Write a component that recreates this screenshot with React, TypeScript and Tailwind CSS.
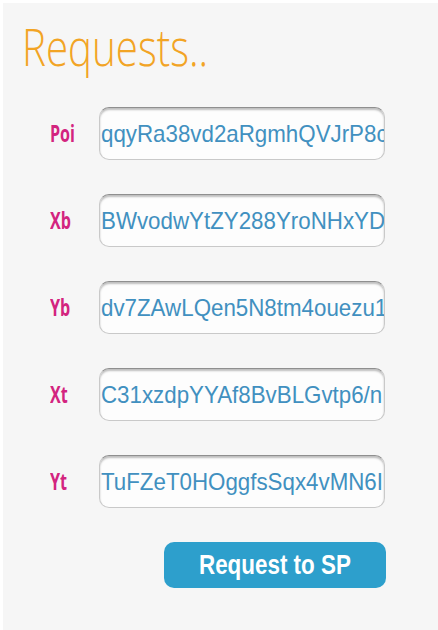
import React from "react";

const fields: { label: string; value: string }[] = [
  { label: "Poi", value: "qqyRa38vd2aRgmhQVJrP8c" },
  { label: "Xb", value: "BWvodwYtZY288YroNHxYDq" },
  { label: "Yb", value: "dv7ZAwLQen5N8tm4ouezu1" },
  { label: "Xt", value: "C31xzdpYYAf8BvBLGvtp6/n" },
  { label: "Yt", value: "TuFZeT0HOggfsSqx4vMN6I" },
];

export default function App() {
  return (
    <div className="w-[438px] h-[630px] bg-white pt-[3px] pl-[3px]">
      <div className="h-[627px] w-[435px] bg-[#f6f6f6] flex flex-col">
        <h1
          className="pl-[24px] pt-[13px] text-[51px] leading-[60px] font-light text-[#f2a425] origin-left scale-x-[0.79]"
          style={{ fontFamily: '"Open Sans", sans-serif' }}
        >
          Requests..
        </h1>

        <div className="mt-[31px] flex flex-col gap-[34px]">
          {fields.map((f) => (
            <div key={f.label} className="flex items-center h-[53px]">
              <div className="w-[96px] pl-[47px] shrink-0">
                <span
                  className="inline-block text-[23px] font-bold text-[#d3247f] origin-left scale-x-[0.7]"
                  style={{ fontFamily: '"Open Sans", sans-serif' }}
                >
                  {f.label}
                </span>
              </div>
              <div className="w-[286px] h-[53px] rounded-[10px] border border-[#c9c9c9] border-t-[#8f8f8f] bg-[#fdfdfd] shadow-[inset_0_2px_2px_rgba(0,0,0,0.25)] overflow-hidden flex items-center pl-[1px]">
                <span
                  className="inline-block whitespace-nowrap text-[24px] text-[#4190c0] origin-left scale-x-[0.93]"
                  style={{ fontFamily: '"Liberation Sans", Arial, sans-serif' }}
                >
                  {f.value}
                </span>
              </div>
            </div>
          ))}
        </div>

        <div className="mt-[34px] pl-[161px]">
          <button className="w-[222px] h-[46px] rounded-[10px] bg-[#2d9fcc] text-white flex items-center justify-center">
            <span
              className="inline-block text-[28px] font-bold scale-x-[0.8] whitespace-nowrap"
              style={{ fontFamily: '"Liberation Sans", Arial, sans-serif' }}
            >
              Request to SP
            </span>
          </button>
        </div>
      </div>
    </div>
  );
}
